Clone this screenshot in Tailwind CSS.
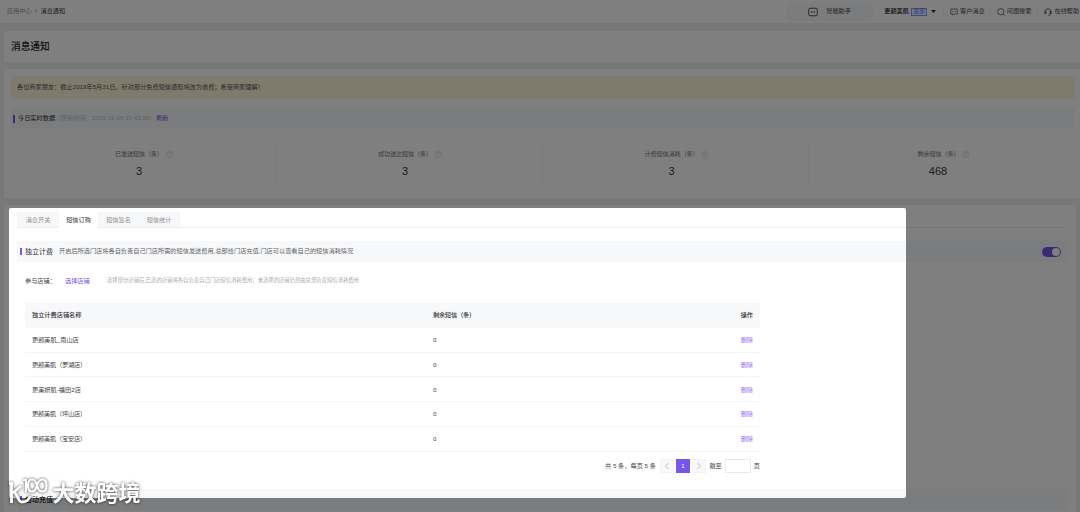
<!DOCTYPE html>
<html lang="zh-CN">
<head>
  <meta charset="UTF-8">
  <meta name="viewport" content="width=device-width, initial-scale=1.0">
  <title>消息通知</title>
  <script src="https://cdn.jsdelivr.net/npm/@tailwindcss/browser@4"></script>
</head>
<body class="relative h-[512px] w-[1080px] overflow-hidden bg-[#f1f1f2] font-['Liberation_Sans','Noto_Sans_CJK_SC',sans-serif] text-[6.2px] leading-none text-[#444]">

  <!-- Top bar -->
  <header class="flex h-[23px] items-center bg-white pl-[7px] whitespace-nowrap">
    <div class="flex items-center">
      <span class="text-[#999]">应用中心</span>
      <span class="mx-[3.5px] text-[#777]">/</span>
      <span class="text-[#333]">消息通知</span>
    </div>
    <div class="ml-[720px] flex h-[18px] w-[89px] shrink-0 items-center rounded-full bg-[#f7f8fa] pl-[23px]">
      <svg class="size-[10px]" viewBox="0 0 20 20" fill="none" stroke="#444" stroke-width="1.800"><rect x="1.500" y="2.500" width="17" height="15" rx="2.500"/><path d="M7.500 8v4M12.500 8v4"/></svg>
      <span class="ml-[8px]">智能助手</span>
    </div>
    <div class="ml-[10px] flex items-center">
      <span class="font-medium text-[#222]">更颜美肌</span>
      <span class="ml-[2px] flex h-[8px] w-[16px] items-center justify-center border border-[#7ba0f5] bg-[#eaf1ff] text-[5.5px] text-[#3370ff]">总部</span>
      <svg class="ml-[4px] h-[3px] w-[5px]" viewBox="0 0 5 3"><path d="M0 0h5L2.500 3z" fill="#333"/></svg>
    </div>
    <div class="ml-[7px] h-[7px] w-px bg-[#eee]"></div>
    <div class="ml-[6px] flex items-center">
      <svg class="size-[8px]" viewBox="0 0 16 16" fill="none" stroke="#444" stroke-width="1.300"><path d="M1.500 2h13v10H7.500L5 14v-2H1.500z"/><path d="M4.500 7h1.500M7.300 7h1.500M10.100 7h1.500"/></svg>
      <span class="ml-[2px]">客户消息</span>
    </div>
    <div class="ml-[5px] h-[7px] w-px bg-[#eee]"></div>
    <div class="ml-[6px] flex items-center">
      <svg class="size-[8px]" viewBox="0 0 16 16" fill="none" stroke="#444" stroke-width="1.400"><circle cx="7.500" cy="7.500" r="6.300"/><path d="M12 12l3.500 3.500"/></svg>
      <span class="ml-[2px]">问题搜索</span>
    </div>
    <div class="ml-[6px] h-[7px] w-px bg-[#eee]"></div>
    <div class="ml-[6px] flex items-center">
      <svg class="size-[8px]" viewBox="0 0 16 16" fill="none" stroke="#444" stroke-width="1.500"><path d="M2.500 7a5.500 5.500 0 0 1 11 0v3c0 3-2 5-5 5"/><path d="M4 6.500H1.500v4.500H4zM12 6.500h2.500v4.500H12z"/></svg>
      <span class="ml-[2px]">在线帮助</span>
    </div>
  </header>

  <!-- Page title -->
  <div class="mt-[8px] ml-[4px] flex h-[31px] items-center bg-white pl-[7px] text-[9.7px] font-medium text-[#222]">消息通知</div>

  <!-- Today's figures -->
  <section class="mt-[7px] ml-[4px] h-[129px] bg-white pt-[7px] pr-[5px] pl-[7px]">
    <div class="flex h-[23px] items-center bg-[#fff6d8] pl-[6px] text-[#555]">各位商家朋友：截止2019年5月31日，针对部分免费短信通知将改为收费；希望商家理解！</div>
    <div class="mt-[9px] flex h-[21px] items-center bg-[#f7f8fa] pl-[2px] whitespace-nowrap">
      <span class="h-[8px] w-[2px] bg-[#7a54ee]"></span>
      <span class="ml-[3px] text-[#333]">今日实时数据</span>
      <span class="w-[101px] text-[#c4c4c4]">（更新时间：2025-11-06 17:43:29）</span>
      <span class="text-[#7a54ee]">刷新</span>
    </div>
    <div class="mt-[16px] grid h-[38px] grid-cols-4 divide-x divide-[#f6f6f6] text-[#777]">
      <div class="flex flex-col items-center pt-[6px] pl-[1px]">
        <div class="flex items-center gap-[3px]"><span class="tracking-[-0.2px]">已发送短信（条）</span><svg class="size-[7px]" viewBox="0 0 14 14" fill="none" stroke="#bbb"><circle cx="7" cy="7" r="6"/><path d="M5.200 5.500a1.800 1.800 0 1 1 1.800 2v1M7 9.500v1"/></svg></div>
        <div class="mt-[8px] mr-[10px] text-[11px] text-[#333]">3</div>
      </div>
      <div class="flex flex-col items-center pt-[6px] pl-[1px]">
        <div class="flex items-center gap-[3px]"><span class="tracking-[-0.2px]">成功送达短信（条）</span><svg class="size-[7px]" viewBox="0 0 14 14" fill="none" stroke="#bbb"><circle cx="7" cy="7" r="6"/><path d="M5.200 5.500a1.800 1.800 0 1 1 1.800 2v1M7 9.500v1"/></svg></div>
        <div class="mt-[8px] mr-[10px] text-[11px] text-[#333]">3</div>
      </div>
      <div class="flex flex-col items-center pt-[6px] pl-[2px]">
        <div class="flex items-center gap-[3px]"><span class="tracking-[-0.2px]">计费短信消耗（条）</span><svg class="size-[7px]" viewBox="0 0 14 14" fill="none" stroke="#bbb"><circle cx="7" cy="7" r="6"/><path d="M5.200 5.500a1.800 1.800 0 1 1 1.800 2v1M7 9.500v1"/></svg></div>
        <div class="mt-[8px] mr-[10px] text-[11px] text-[#333]">3</div>
      </div>
      <div class="flex flex-col items-center pt-[6px] pl-[3px]">
        <div class="flex items-center gap-[3px]"><span class="tracking-[-0.2px]">剩余短信（条）</span><svg class="size-[7px]" viewBox="0 0 14 14" fill="none" stroke="#bbb"><circle cx="7" cy="7" r="6"/><path d="M5.200 5.500a1.800 1.800 0 1 1 1.800 2v1M7 9.500v1"/></svg></div>
        <div class="mt-[8px] mr-[11px] text-[11px] text-[#333]">468</div>
      </div>
    </div>
  </section>

  <!-- SMS ordering -->
  <section class="mt-[7px] mr-[4px] ml-[4px] h-[320px] bg-white pt-[7px] pr-[8px] pl-[13px]">
    <nav class="flex h-[16px] border-b border-[#eee] text-[#909090]">
      <div class="flex w-[42px] items-center justify-center border border-b-0 border-[#f3f4f6] bg-[#f7f8fa]">消息开关</div>
      <div class="-mb-px flex w-[39px] items-center justify-center bg-white text-[#333]">短信订购</div>
      <div class="flex w-[41px] items-center justify-center border border-b-0 border-[#f3f4f6] bg-[#f7f8fa]">短信签名</div>
      <div class="flex w-[41px] items-center justify-center border border-b-0 border-l-0 border-[#f3f4f6] bg-[#f7f8fa]">短信统计</div>
    </nav>
    <div class="mt-[13px] flex h-[21px] items-center bg-[#f7f8fa] pr-[7px] pl-[3px] whitespace-nowrap">
      <span class="h-[7px] w-[2px] bg-[#7a54ee]"></span>
      <span class="ml-[3px] text-[7px] text-[#333]">独立计费</span>
      <span class="ml-[6px] text-[#666]">开启后所选门店将各自负责自己门店所需的短信发送费用,总部给门店充值,门店可以查看自己的短信消耗情况</span>
      <span class="ml-auto flex h-[10px] w-[19px] items-center justify-end rounded-full bg-[#7a54ee] pr-[1px]"><i class="size-[8px] rounded-full bg-white"></i></span>
    </div>
    <div class="mt-[15px] flex h-[8px] items-center pl-[8px] whitespace-nowrap">
      <span class="w-[40px]">参与店铺：</span>
      <span class="w-[42px] text-[#7a54ee]">选择店铺</span>
      <span class="text-[5.33px] text-[#aaa]">选择部分店铺后,已选的店铺将各自负责自己门店短信消耗费用；未选择的店铺仍然由总部负责短信消耗费用</span>
    </div>
    <div class="mt-[18px] ml-[8px] w-[735px]">
      <div class="flex h-[24.800px] items-center bg-[#f7f8fa] px-[7px] font-medium text-[#333]">
        <span class="w-[401px]">独立计费店铺名称</span><span class="tracking-[-0.2px]">剩余短信（条）</span><span class="ml-auto">操作</span>
      </div>
      <div class="flex h-[24.800px] items-center border-b border-[#f4f4f4] px-[7px] pt-[1px]">
        <span class="w-[401px]">更颜美肌_南山店</span><span>0</span><span class="ml-auto text-[#9474f2]">删除</span>
      </div>
      <div class="flex h-[24.800px] items-center border-b border-[#f4f4f4] px-[7px] pt-[1px]">
        <span class="w-[401px] tracking-[-0.2px]">更颜美肌（罗湖店）</span><span>0</span><span class="ml-auto text-[#9474f2]">删除</span>
      </div>
      <div class="flex h-[24.800px] items-center border-b border-[#f4f4f4] px-[7px] pt-[1px]">
        <span class="w-[401px]">更美妍肌-福田2店</span><span>0</span><span class="ml-auto text-[#9474f2]">删除</span>
      </div>
      <div class="flex h-[24.800px] items-center border-b border-[#f4f4f4] px-[7px] pt-[1px]">
        <span class="w-[401px] tracking-[-0.2px]">更颜美肌（坪山店）</span><span>0</span><span class="ml-auto text-[#9474f2]">删除</span>
      </div>
      <div class="flex h-[24.800px] items-center border-b border-[#f4f4f4] px-[7px] pt-[1px]">
        <span class="w-[401px] tracking-[-0.2px]">更颜美肌（宝安店）</span><span>0</span><span class="ml-auto text-[#9474f2]">删除</span>
      </div>
      <div class="mt-[7px] flex h-[14px] items-center justify-end whitespace-nowrap">
        <span>共 5 条，每页 5 条</span>
        <span class="ml-[4px] flex size-[14px] items-center justify-center border border-[#f1f2f4] bg-[#f7f8fa]"><svg class="size-[8px]" viewBox="0 0 8 8" fill="none" stroke="#aaa" stroke-width=".8"><path d="M5.500 1L2.500 4l3 3"/></svg></span>
        <span class="ml-[2px] flex size-[14px] items-center justify-center bg-[#7a54ee] text-white">1</span>
        <span class="ml-[2px] flex size-[14px] items-center justify-center border border-[#f1f2f4] bg-[#f7f8fa]"><svg class="size-[8px]" viewBox="0 0 8 8" fill="none" stroke="#aaa" stroke-width=".8"><path d="M2.500 1l3 3-3 3"/></svg></span>
        <span class="ml-[3.500px]">跳至</span>
        <span class="mx-[3px] h-[14px] w-[26px] border border-[#e8e8ea] bg-white"></span>
        <span>页</span>
      </div>
    </div>
    <div class="mt-[16px] flex h-[21px] items-center bg-[#f7f8fa] pl-[3px]">
      <span class="h-[7px] w-[2px] bg-[#7a54ee]"></span>
      <span class="ml-[3px] text-[7px] font-medium text-[#222]">自动充值</span>
    </div>
  </section>

  <!-- Dimmed surroundings -->
  <div class="absolute top-[208px] left-[9px] h-[290px] w-[897px] rounded-[2px] shadow-[0_0_0_1200px_rgba(0,0,0,0.5)]"></div>

  <!-- Watermark -->
  <div class="absolute top-[476px] left-[8px] flex h-[30px] items-center drop-shadow-[0_0_1.5px_rgba(0,0,0,0.75)]">
    <svg class="h-[30px] w-[42px]" viewBox="0 0 42 30" fill="none" stroke="#fff" stroke-width="2.800">
      <path d="M1 7.500h2.500V27M5 17l8-7M5 16c5 0 4 10 9 10 4 0 7-2 8-6"/>
      <path d="M15 4h3v12" stroke-width="2.200"/>
      <path d="M29 9.500c-1-4-3-6-5-6-2.500 0-4 2.500-4 6s1.500 6 4 6c2 0 4-2 5-6s3-6 5.500-6 4 2.500 4 6-1.500 6-4 6-4.500-2-5.500-6z" stroke-width="2.200"/>
    </svg>
    <span class="mb-[1px] ml-[2.500px] font-['Noto_Sans_CJK_SC',sans-serif] text-[22px] font-bold text-white">大数跨境</span>
  </div>
</body>
</html>
